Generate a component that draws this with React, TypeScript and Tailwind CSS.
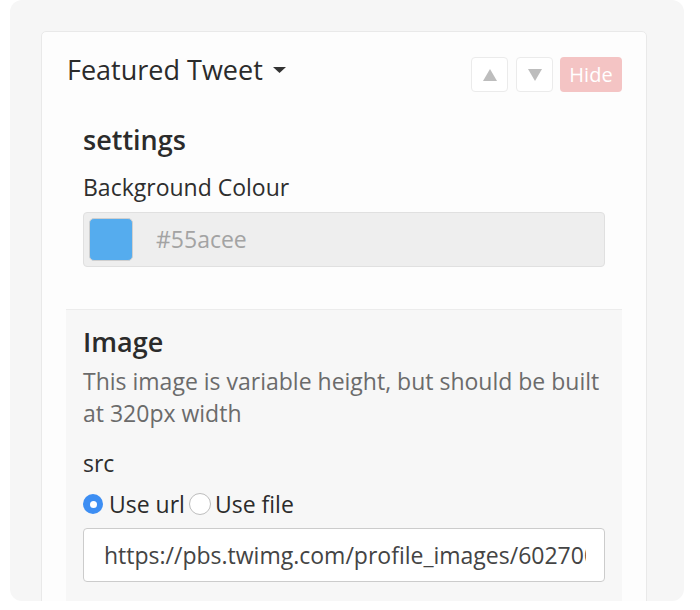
import { useState, type ReactNode } from 'react'

const font = { fontFamily: '"Open Sans", "Noto Sans", sans-serif' }

function ArrowButton({ dir }: { dir: 'up' | 'down' }): ReactNode {
  return (
    <button className="flex h-[35px] w-[37px] items-center justify-center rounded-[4px] border border-[#ebebeb] bg-white">
      <svg width="16" height="14" viewBox="0 0 16 14">
        {dir === 'up' ? (
          <polygon points="8,1 15,13 1,13" fill="#bdbdbd" />
        ) : (
          <polygon points="1,1 15,1 8,13" fill="#bdbdbd" />
        )}
      </svg>
    </button>
  )
}

function Radio({ checked }: { checked: boolean }): ReactNode {
  return checked ? (
    <span className="flex h-[20px] w-[20px] items-center justify-center rounded-full bg-[#3d8ef3]">
      <span className="h-[7px] w-[7px] rounded-full bg-white" />
    </span>
  ) : (
    <span className="h-[22px] w-[22px] rounded-full border border-[#bdbdbd] bg-white" />
  )
}

export default function App(): ReactNode {
  const [mode, setMode] = useState<'url' | 'file'>('url')

  return (
    <div className="bg-white px-[10px]" style={font}>
      <div className="h-[601px] w-[674px] overflow-hidden rounded-[12px] bg-[#f6f6f6] pl-[31px] pr-[37px] pt-[31px]">
        <div className="flex h-[620px] flex-col rounded-[5px] border border-[#e9e9e9] bg-[#fdfdfd] px-[24px] pt-[20px]">
          <div className="flex items-start justify-between">
            <h1 className="flex items-center gap-[10px] pl-[1px] text-[27px] font-normal leading-[36px] text-[#2b2b2b]">
              Featured Tweet
              <svg width="13" height="8" viewBox="0 0 13 8">
                <polygon points="0,1 13,1 6.5,7" fill="#333" />
              </svg>
            </h1>
            <div className="flex gap-[7px] pt-[5px]">
              <span className="mr-[1px] flex">
                <ArrowButton dir="up" />
              </span>
              <ArrowButton dir="down" />
              <button className="h-[35px] w-[62px] rounded-[4px] bg-[#f4c4c4] text-[20px] leading-[35px] text-white">
                Hide
              </button>
            </div>
          </div>

          <section className="px-[17px] pb-[42px] pt-[30px]">
            <h2 className="text-[27px] font-semibold leading-[36px] text-[#2b2b2b]">settings</h2>
            <label className="mt-[14px] block text-[23px] leading-[30px] text-[#2e2e2e]">
              Background Colour
            </label>
            <div className="mt-[10px] flex h-[55px] items-center rounded-[4px] border border-[#e0e0e0] bg-[#eeeeee] pl-[5px]">
              <span className="h-[43px] w-[44px] rounded-[5px] border border-[#cfcfcf] bg-[#55acee]" />
              <span className="ml-[23px] text-[23px] text-[#a3a3a3]">#55acee</span>
            </div>
          </section>

          <section className="flex-1 border-t border-[#ececec] bg-[#f7f7f7] px-[17px] pt-[14px]">
            <h2 className="text-[27px] font-semibold leading-[36px] text-[#2b2b2b]">Image</h2>
            <p className="mt-[5px] text-[23px] leading-[32px] text-[#6b6b6b]">
              This image is variable height, but should be built at 320px width
            </p>
            <label className="mt-[19px] block text-[23px] leading-[30px] text-[#2e2e2e]">src</label>
            <div className="mt-[11px] flex items-center text-[23px] leading-[30px] text-[#2b2b2b]">
              <button className="flex items-center gap-[6px]" onClick={() => setMode('url')}>
                <Radio checked={mode === 'url'} />
                Use url
              </button>
              <button className="ml-[4px] flex items-center gap-[4px]" onClick={() => setMode('file')}>
                <Radio checked={mode === 'file'} />
                Use file
              </button>
            </div>
            <input
              readOnly
              value="https://pbs.twimg.com/profile_images/602700000000000000/pic_400x400.jpg"
              className="mt-[9px] h-[54px] w-full rounded-[4px] border border-[#cccccc] bg-white pl-[20px] pr-[18px] text-[23px] text-[#444] outline-none"
              style={font}
            />
          </section>
        </div>
      </div>
    </div>
  )
}
